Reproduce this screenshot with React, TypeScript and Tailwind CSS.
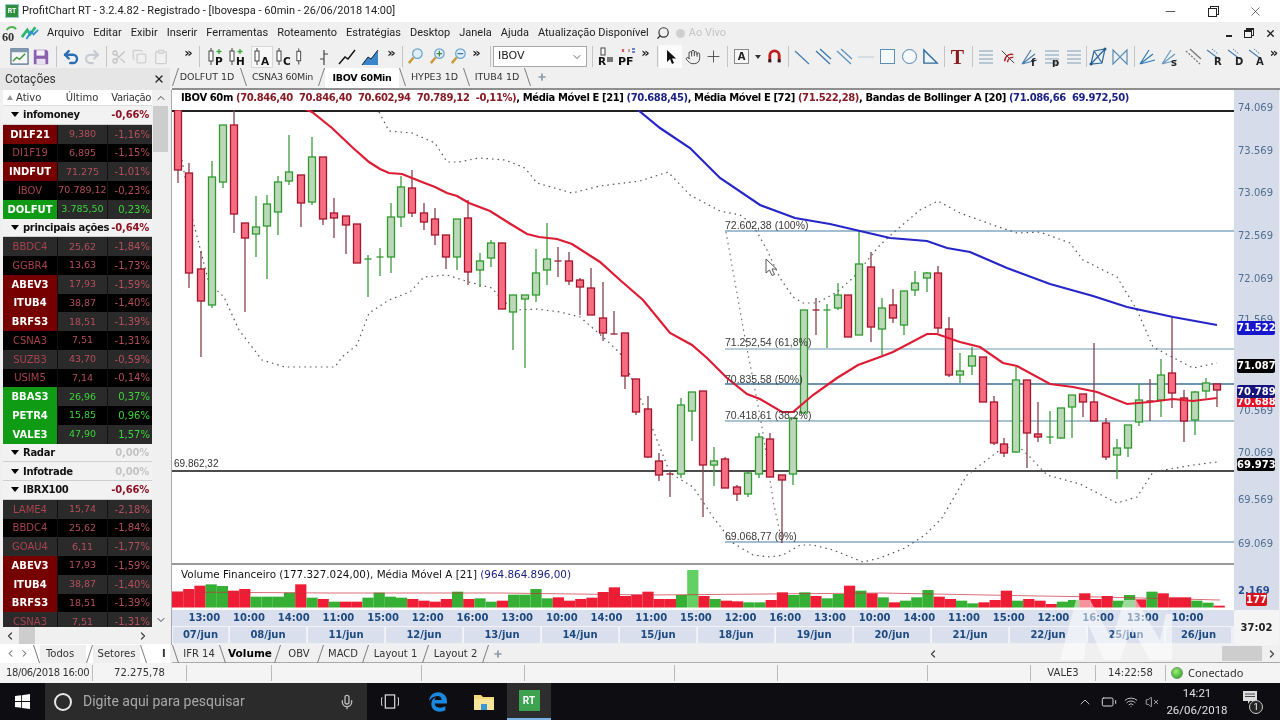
import { ChevronDown, ChevronLeft, ChevronRight, ChevronUp, Clipboard, Copy, Hand, Mic, Scissors, Search, VolumeX, Wifi, Undo2, Redo2, Battery, Plus, Minus, X } from 'lucide-react';
import { FaEdgeLegacy } from 'react-icons/fa6';

type Candle = [number, number, number, number, number, 'r' | 'g'];

const candles: Candle[] = [
  [178, 110, 110, 170, 183, 'r'], [189, 163, 173, 273, 288, 'r'], [201, 251, 269, 301, 357, 'r'], [212, 161, 177, 305, 308, 'g'],
  [223, 125, 125, 182, 188, 'g'], [234, 110, 125, 214, 233, 'r'], [245, 223, 223, 238, 312, 'r'], [256, 196, 227, 234, 257, 'g'],
  [267, 195, 204, 226, 279, 'g'], [278, 176, 182, 212, 235, 'g'], [289, 135, 172, 181, 185, 'g'], [301, 175, 175, 203, 227, 'r'],
  [312, 137, 157, 202, 205, 'g'], [323, 157, 157, 219, 225, 'r'], [334, 198, 213, 218, 238, 'r'], [346, 216, 216, 225, 254, 'r'],
  [357, 224, 224, 263, 263, 'r'], [368, 255, 259, 260, 297, 'g'], [380, 248, 257, 258, 276, 'g'], [391, 203, 217, 257, 273, 'g'],
  [401, 176, 187, 217, 227, 'g'], [412, 170, 188, 213, 217, 'r'], [424, 203, 213, 222, 230, 'r'], [435, 208, 219, 235, 245, 'r'],
  [446, 235, 235, 257, 269, 'r'], [457, 219, 219, 257, 270, 'g'], [468, 200, 218, 272, 285, 'r'], [480, 253, 261, 270, 287, 'g'],
  [491, 240, 243, 258, 267, 'g'], [502, 243, 243, 309, 309, 'r'], [513, 295, 295, 312, 350, 'g'], [525, 295, 295, 299, 368, 'g'],
  [536, 249, 273, 295, 302, 'g'], [547, 223, 259, 270, 285, 'g'], [558, 247, 261, 262, 277, 'r'], [569, 252, 261, 281, 285, 'r'],
  [580, 278, 280, 287, 315, 'r'], [591, 268, 288, 315, 315, 'r'], [603, 282, 318, 333, 341, 'r'], [614, 311, 334, 334, 334, 'r'],
  [625, 333, 333, 376, 389, 'r'], [636, 379, 379, 412, 415, 'r'], [648, 396, 409, 457, 458, 'r'], [659, 453, 461, 475, 481, 'r'],
  [670, 472, 474, 474, 497, 'r'], [681, 398, 405, 474, 478, 'g'], [692, 392, 392, 411, 441, 'g'], [703, 391, 391, 465, 517, 'r'],
  [714, 447, 461, 465, 486, 'g'], [725, 457, 459, 488, 488, 'r'], [737, 485, 487, 494, 501, 'r'], [748, 472, 473, 494, 497, 'g'],
  [759, 433, 437, 474, 478, 'g'], [770, 433, 439, 477, 477, 'r'], [782, 475, 475, 480, 543, 'r'], [793, 418, 418, 474, 485, 'g'],
  [804, 310, 310, 413, 413, 'g'], [816, 298, 310, 310, 335, 'r'], [827, 304, 310, 310, 348, 'g'], [838, 283, 295, 308, 310, 'g'],
  [848, 295, 295, 337, 337, 'r'], [859, 231, 264, 335, 335, 'g'], [871, 252, 267, 327, 342, 'r'], [882, 298, 308, 329, 355, 'g'],
  [893, 289, 305, 318, 323, 'r'], [904, 291, 291, 325, 335, 'g'], [915, 271, 283, 290, 296, 'g'], [927, 272, 273, 278, 292, 'g'],
  [938, 266, 273, 328, 333, 'r'], [949, 317, 329, 375, 377, 'r'], [960, 353, 371, 375, 383, 'g'], [972, 347, 356, 366, 375, 'g'],
  [983, 357, 357, 402, 402, 'r'], [994, 396, 402, 443, 445, 'r'], [1004, 438, 444, 453, 457, 'r'], [1016, 367, 380, 452, 453, 'g'],
  [1027, 380, 380, 433, 468, 'r'], [1038, 402, 434, 437, 442, 'r'], [1050, 411, 437, 437, 444, 'g'], [1061, 408, 408, 438, 439, 'g'],
  [1072, 395, 395, 407, 438, 'g'], [1083, 394, 394, 402, 417, 'r'], [1094, 343, 402, 421, 421, 'r'], [1106, 418, 423, 457, 460, 'r'],
  [1117, 439, 448, 455, 479, 'g'], [1128, 425, 425, 448, 457, 'g'], [1139, 384, 400, 422, 426, 'g'], [1150, 379, 401, 401, 421, 'r'],
  [1161, 359, 375, 400, 417, 'g'], [1172, 317, 373, 393, 408, 'r'], [1184, 390, 398, 421, 442, 'r'], [1195, 391, 392, 420, 435, 'g'],
  [1206, 378, 383, 391, 398, 'g'], [1217, 384, 384, 390, 407, 'r'],
];

const ma21 = '300,107 312,112 332,128 352,147 369,162 380,169 389,173 402,174 422,182 435,187 447,193 457,196 469,203 490,211 509,223 527,234 539,237 557,239 572,244 600,262 620,280 643,300 670,333 692,345 707,358 727,378 747,394 760,399 782,412 793,412 813,395 837,378 858,365 880,357 893,352 927,334 937,334 960,342 980,347 1003,363 1017,366 1050,384 1073,387 1097,392 1127,404 1150,402 1173,399 1193,401 1217,398';
const ma72 = '638,110 660,128 690,148 720,178 760,205 795,218 830,224 860,231 890,238 927,241 947,248 970,252 1007,268 1050,284 1093,296 1127,307 1173,317 1217,325';
const bbUpper = '379,112 389,131 412,133 435,143 447,162 459,162 479,158 505,160 525,168 537,183 572,193 600,186 640,181 668,172 690,195 720,211 740,215 747,220 757,232 767,250 780,278 793,297 803,303 817,303 837,292 853,278 880,245 893,233 920,210 938,201 960,213 993,225 1017,233 1040,232 1070,243 1083,260 1117,277 1137,310 1153,347 1193,368 1217,363';
const bbLower = '182,160 192,217 209,283 224,297 239,330 262,360 285,367 335,367 342,357 357,345 369,313 389,300 410,292 424,277 447,275 469,282 492,288 502,300 515,310 537,309 560,312 580,317 603,337 620,353 640,397 657,440 670,473 693,487 713,517 733,543 753,555 770,557 783,555 800,545 813,545 833,550 863,562 880,558 905,548 925,535 942,518 967,475 1000,450 1017,445 1030,457 1047,475 1080,484 1117,503 1137,497 1153,472 1193,465 1217,462';

const fibs = [
  { y: 231, c: '#4a7ea3', w: 1.2, x: 725, t: '72.602,38 (100%)', ty: 229 },
  { y: 349, c: '#6d9cbc', w: 1.2, x: 725, t: '71.252,54 (61,8%)', ty: 346 },
  { y: 384, c: '#3f7099', w: 1.3, x: 725, t: '70.835,58 (50%)', ty: 383 },
  { y: 421, c: '#a9c3d5', w: 1.8, x: 725, t: '70.418,61 (38,2%)', ty: 419 },
  { y: 542, c: '#4a7ea3', w: 1.2, x: 725, t: '69.068,77 (0%)', ty: 540 },
];

// topo de cada barra de volume (em y da tela) e cor
const volTops: [number, 'r' | 'g'][] = ([
  [95,'r'],[87,'r'],[77,'r'],[73,'g'],[78,'g'],[92,'r'],[87,'r'],[110,'g'],[110,'g'],[110,'g'],[98,'g'],[73,'r'],[113,'g'],[117,'r'],[125,'g'],[125,'r'],[125,'r'],[113,'g'],[98,'g'],[110,'g'],[113,'g'],[117,'r'],[122,'r'],[125,'r'],[117,'r'],[95,'g'],[117,'r'],[115,'g'],[125,'g'],[122,'r'],[104,'g'],[104,'g'],[87,'g'],[115,'g'],[112,'r'],[122,'r'],[117,'r'],[113,'r'],[96,'r'],[82,'r'],[108,'r'],[104,'r'],
  [95,'r'],[117,'r'],[117,'r'],[105,'g'],[30,'g'],[108,'r'],[117,'g'],[122,'r'],[124,'r'],[127,'g'],[127,'g'],[120,'r'],[97,'r'],[105,'g'],[97,'g'],[108,'r'],[115,'g'],[102,'g'],[77,'r'],[92,'g'],[100,'r'],[112,'g'],[127,'r'],[122,'g'],[112,'g'],[90,'g'],[110,'r'],[117,'r'],[122,'g'],[130,'g'],[127,'r'],[120,'r'],[92,'r'],[122,'g'],[117,'r'],[122,'r'],[132,'r'],[125,'g'],[120,'g'],[100,'r'],[117,'r'],[108,'r'],[122,'g'],[105,'g'],[118,'r'],[95,'g'],[100,'r'],[112,'r'],[112,'r'],[122,'g'],[128,'g'],[137,'r'],
] as [number, 'r' | 'g'][]).map(([z, c]) => [560 + z / 3, c]);

const priceLabels = [
  ['74.069', 108], ['73.569', 151], ['73.069', 193], ['72.569', 236], ['72.069', 279], ['71.569', 320],
  ['70.569', 411], ['70.069', 453], ['69.569', 500], ['69.069', 544],
] as [string, number][];

const times = ['13:00','10:00','14:00','11:00','15:00','12:00','16:00','13:00','10:00','14:00','11:00','15:00','12:00','16:00','13:00','10:00','14:00','11:00','15:00','12:00','16:00','13:00','10:00'];

type Quote = [string, string, string, '' | 'r' | 'g', ('g' | undefined)?];
const g1: Quote[] = [['DI1F21','9,380','-1,16%','r'],['DI1F19','6,895','-1,15%',''],['INDFUT','71.275','-1,01%','r'],['IBOV','70.789,12','-0,23%',''],['DOLFUT','3.785,50','0,23%','g','g']];
const g2: Quote[] = [['BBDC4','25,62','-1,84%',''],['GGBR4','13,63','-1,73%',''],['ABEV3','17,93','-1,59%','r'],['ITUB4','38,87','-1,40%','r'],['BRFS3','18,51','-1,39%','r'],['CSNA3','7,51','-1,31%',''],['SUZB3','43,70','-0,59%',''],['USIM5','7,14','-0,14%',''],['BBAS3','26,96','0,37%','g','g'],['PETR4','15,85','0,96%','g','g'],['VALE3','47,90','1,57%','g','g']];
const g3: Quote[] = [['LAME4','15,74','-2,18%',''],['BBDC4','25,62','-1,84%',''],['GOAU4','6,11','-1,77%',''],['ABEV3','17,93','-1,59%','r'],['ITUB4','38,87','-1,40%','r'],['BRFS3','18,51','-1,39%','r'],['CSNA3','7,51','-1,31%','']];

function GroupRow({ name, pct, zero }: { name: string; pct: string; zero?: boolean }) {
  return (
    <div className="h-[18.75px] shrink-0 flex items-center bg-[#f2f2f2] border-b border-[#cfcfcf] pl-[8px] pr-[3px]">
      <span className="w-0 h-0 border-x-[4px] border-x-transparent border-t-[5px] border-t-black mr-[4px]" />
      <span className="text-[10px] font-bold text-[#111] whitespace-nowrap tracking-[-0.3px]">{name}</span>
      <span className={`ml-auto text-[10px] font-bold tracking-[-0.2px] ${zero ? 'text-[#c4c4c4]' : 'text-[#8e1224]'}`}>{pct}</span>
    </div>
  );
}

function QuoteRows({ rows }: { rows: Quote[] }) {
  return (
    <>
      {rows.map((r, i) => {
        const zebra = i % 2 === 0 ? 'bg-[#2a2a2a]' : 'bg-black';
        const col = r[4] === 'g' ? 'text-[#3bd43b]' : 'text-[#b44f5a]';
        const tick = r[3] === 'r' ? 'bg-[#760000] text-white font-bold' : r[3] === 'g' ? 'bg-[#0f9c14] text-white font-bold' : `${zebra} text-[#a8424e]`;
        return (
          <div key={r[0] + i} className={`h-[18.75px] shrink-0 flex items-center text-[10px] ${zebra}`}>
            <div className={`w-[54px] h-full flex items-center justify-center ${tick}`}>{r[0]}</div>
            <div className={`w-[50px] h-full flex items-center justify-center border-l border-[#111] ${col} whitespace-nowrap text-[9.5px]`}>{r[1]}</div>
            <div className={`w-[45px] h-full flex items-center justify-end pr-[2px] border-l border-[#111] ${col}`}>{r[2]}</div>
          </div>
        );
      })}
    </>
  );
}

function Slash({ back, h = 'h-[18px]' }: { back?: boolean; h?: string }) {
  return (
    <svg viewBox="0 0 7 18" className={`w-[7px] shrink-0 ${h}`}>
      <line x1={back ? 0.5 : 6.5} y1="0" x2={back ? 6.5 : 0.5} y2="18" stroke="#7c7c7c" strokeWidth="1" />
    </svg>
  );
}

function Tb({ w = 'w-[21px]', children }: { w?: string; children?: React.ReactNode }) {
  return <div className={`${w} h-[22px] shrink-0 flex items-center justify-center`}>{children}</div>;
}

function Sep({ cls }: { cls: string }) {
  return <div className={`w-px h-[21px] bg-[#c4c4c4] shrink-0 ${cls}`} />;
}

function More({ w = 'w-[21px]', cls = '' }: { w?: string; cls?: string }) {
  return <div className={`${w} ${cls} h-[22px] shrink-0 flex items-start justify-center text-[13px] leading-[14px] font-bold text-[#222]`}>»</div>;
}

function CandleIco({ letter }: { letter?: string }) {
  return (
    <svg viewBox="0 0 20 20" className="w-[20px] h-[20px]">
      <line x1="5" y1="1" x2="5" y2="18" stroke="#444" strokeWidth="1" />
      <rect x="3" y="4" width="4" height="10" fill="#fff" stroke="#444" strokeWidth="1" />
      {letter && <text x="9" y="18" fontSize="10.5" fontWeight="700" fill="#111" fontFamily="DejaVu Sans">{letter}</text>}
      {(letter === 'P' || letter === 'H') && <path d="M13 2v5M10.5 4.5h5" stroke="#3ca63c" strokeWidth="1.3" />}
    </svg>
  );
}

function Diag({ c = '#4a7fb0', dash, double }: { c?: string; dash?: boolean; double?: boolean }) {
  return (
    <svg viewBox="0 0 18 18" className="w-[18px] h-[18px]">
      <line x1="2" y1="3" x2="16" y2="16" stroke={c} strokeWidth="1.3" strokeDasharray={dash ? '2 1.5' : undefined} />
      {double && <line x1="6" y1="1" x2="17" y2="11" stroke={c} strokeWidth="1.3" />}
    </svg>
  );
}

function LetterLine({ l, c = '#4a7fb0' }: { l: string; c?: string }) {
  return (
    <svg viewBox="0 0 20 20" className="w-[20px] h-[20px]">
      <line x1="2" y1="3" x2="14" y2="12" stroke={c} strokeWidth="1.2" />
      <line x1="7" y1="2" x2="13" y2="7" stroke={c} strokeWidth="1" strokeDasharray="1.5 1" />
      <text x="9" y="18" fontSize="10" fontWeight="700" fill="#222" fontFamily="DejaVu Sans">{l}</text>
    </svg>
  );
}

function Fan({ l, c = '#4a7fb0' }: { l?: string; c?: string }) {
  return (
    <svg viewBox="0 0 20 20" className="w-[20px] h-[20px]">
      <path d="M2 17L11 3M2 17L15 7M2 17L17 13" stroke={c} strokeWidth="1.2" fill="none" />
      {l && <text x="11" y="19" fontSize="10" fontWeight="700" fill="#222" fontFamily="DejaVu Sans">{l}</text>}
    </svg>
  );
}

function Lines({ l }: { l?: string }) {
  return (
    <svg viewBox="0 0 20 20" className="w-[20px] h-[20px]">
      <path d="M3 4h14M3 8h14M3 12h14M3 16h14" stroke="#7f9fb8" strokeWidth="1.1" />
      {l && <text x="10" y="19" fontSize="10" fontWeight="700" fill="#222" fontFamily="DejaVu Sans">{l}</text>}
    </svg>
  );
}

function Toolbar() {
  return (
    <div className="h-[24px] shrink-0 flex items-center pl-[9px] pt-px">
      <Tb>
        <svg viewBox="0 0 20 20" className="w-[19px] h-[19px]">
          <rect x="1" y="2" width="18" height="16" fill="#f6f6f6" stroke="#4f6f8e" strokeWidth="1.3" />
          <rect x="1" y="2" width="18" height="3.5" fill="#7f97ad" />
          <path d="M3 15l4-4 3 2 6-6" stroke="#3f9a3f" strokeWidth="1.5" fill="none" />
        </svg>
      </Tb>
      <Tb>
        <svg viewBox="0 0 20 20" className="w-[18px] h-[18px]">
          <path d="M2 2h14l2 2v14H2z" fill="#8a5fb0" />
          <rect x="5" y="2.5" width="9" height="6" fill="#f4f0f8" />
          <rect x="5" y="12" width="10" height="6" fill="#e8dff0" />
        </svg>
      </Tb>
      <Sep cls="ml-[5px] mr-[3px]" />
      <Tb><Undo2 size={18} strokeWidth={3.2} color="#2a6fb5" /></Tb>
      <Tb><Redo2 size={18} strokeWidth={3} color="#c6ccd2" /></Tb>
      <Sep cls="ml-[4px] mr-px" />
      <Tb><Scissors size={16} color="#c4c4c4" /></Tb>
      <Tb><Copy size={15} color="#cfcfcf" /></Tb>
      <Tb><Clipboard size={16} color="#cfcfcf" /></Tb>
      <More cls="ml-[7px]" />
      <Sep cls="mr-[5px]" />
      <Tb><CandleIco letter="P" /></Tb>
      <Tb><CandleIco letter="H" /></Tb>
      <div className="ml-[4px] w-[22px] h-[22px] shrink-0 flex items-center justify-center bg-[#f8f8f8] border border-[#d8d8d8]"><CandleIco letter="A" /></div>
      <Tb><CandleIco letter="C" /></Tb>
      <Tb w="w-[19px]"><CandleIco /></Tb>
      <Tb w="w-[22px]">
        <svg viewBox="0 0 18 18" className="w-[18px] h-[18px]"><path d="M9 2v15M5 11h4M9 6h4" stroke="#444" strokeWidth="1.2" fill="none" /></svg>
      </Tb>
      <Tb w="w-[24px]">
        <svg viewBox="0 0 20 20" className="w-[20px] h-[20px]"><path d="M2 17l6-7 3 2 7-9" stroke="#111" strokeWidth="1.4" fill="none" /></svg>
      </Tb>
      <Tb w="w-[22px]">
        <svg viewBox="0 0 20 20" className="w-[20px] h-[20px]"><path d="M2 18l6-8 3 2 7-9v15z" fill="#3a86c8" /><path d="M2 18l6-8 3 2 7-9" stroke="#123" strokeWidth="1" fill="none" /></svg>
      </Tb>
      <More />
      <Sep cls="mr-[2px]" />
      <Tb>
        <svg viewBox="0 0 20 20" className="w-[19px] h-[19px]"><circle cx="12" cy="7" r="5" fill="#dfeef7" stroke="#6aa5cc" strokeWidth="1.3" /><path d="M8 11l-5 6" stroke="#c99a3c" strokeWidth="2.6" /></svg>
      </Tb>
      <Tb w="w-[22px]">
        <svg viewBox="0 0 20 20" className="w-[19px] h-[19px]"><circle cx="12" cy="7" r="5" fill="#dfeef7" stroke="#6aa5cc" strokeWidth="1.3" /><path d="M8 11l-5 6" stroke="#c99a3c" strokeWidth="2.6" /><path d="M12 4v6M9 7h6" stroke="#3f8a3f" strokeWidth="1.3" /></svg>
      </Tb>
      <Tb>
        <svg viewBox="0 0 20 20" className="w-[19px] h-[19px]"><circle cx="12" cy="7" r="5" fill="#dfeef7" stroke="#6aa5cc" strokeWidth="1.3" /><path d="M8 11l-5 6" stroke="#c99a3c" strokeWidth="2.6" /><path d="M9 7h6" stroke="#3f6f9f" strokeWidth="1.3" /></svg>
      </Tb>
      <More w="w-[15px]" />
      <Sep cls="ml-[6px] mr-[2px]" />
      <div className="w-[94px] h-[21px] shrink-0 bg-white border border-[#a8a8a8] flex items-center pl-[4px] pr-[3px] text-[11px] text-[#222]">
        <span>IBOV</span>
        <ChevronDown size={12} color="#666" className="ml-auto" />
      </div>
      <Sep cls="ml-[5px] mr-[2px]" />
      <Tb>
        <svg viewBox="0 0 20 20" className="w-[20px] h-[20px]"><rect x="5" y="1" width="4" height="7" fill="#fff" stroke="#444" /><rect x="11" y="10" width="6" height="5" fill="#777" /><text x="2" y="18" fontSize="10.5" fontWeight="700" fill="#111" fontFamily="DejaVu Sans">R</text></svg>
      </Tb>
      <Tb>
        <svg viewBox="0 0 20 20" className="w-[20px] h-[20px]"><path d="M5 2l2 3M7 2l-2 3M12 2v3" stroke="#d0384a" strokeWidth="1" /><path d="M15 2h3M15 5h3" stroke="#3a5fc0" strokeWidth="1.4" /><text x="1" y="18" fontSize="11" fontWeight="700" fill="#111" fontFamily="DejaVu Sans">PF</text></svg>
      </Tb>
      <More w="w-[15px]" cls="ml-[1px]" />
      <Sep cls="ml-[4px] mr-[1px]" />
      <div className="w-[23px] h-[23px] shrink-0 flex items-center justify-center bg-[#fbfbfb]">
        <svg viewBox="0 0 14 16" className="w-[14px] h-[16px]"><path d="M3 1v12l3-3 2 5 2-1-2-4.500h4z" fill="#111" /></svg>
      </div>
      <Tb><Hand size={16} color="#333" strokeWidth={1.3} /></Tb>
      <Tb><Plus size={19} color="#333" strokeWidth={1} /></Tb>
      <Sep cls="ml-[3px] mr-[3px]" />
      <Tb>
        <div className="w-[15px] h-[15px] bg-[#f7f7f7] border border-[#888] flex items-center justify-center text-[10px] font-bold text-[#222]">A</div>
      </Tb>
      <div className="w-0 h-0 border-x-[3px] border-x-transparent border-t-[4px] border-t-[#333] mx-[3px] shrink-0" />
      <Tb w="w-[21px]">
        <svg viewBox="0 0 16 16" className="w-[15px] h-[15px]"><path d="M3 14V7a5 5 0 0 1 10 0v7" stroke="#c01c1c" strokeWidth="3" fill="none" /><path d="M1.500 12.500h3M11.500 12.500h3" stroke="#222" strokeWidth="3" /></svg>
      </Tb>
      <Sep cls="ml-[3px] mr-[3px]" />
      <Tb w="w-[20px]"><Diag /></Tb>
      <Tb><Diag c="#3a78ab" double /></Tb>
      <Tb w="w-[22px]"><Diag c="#5c92bd" double /></Tb>
      <Tb>
        <svg viewBox="0 0 18 18" className="w-[18px] h-[18px]"><line x1="1" y1="9" x2="17" y2="9" stroke="#c2d2de" strokeWidth="1.3" /></svg>
      </Tb>
      <Tb w="w-[22px]"><div className="w-[15px] h-[15px] bg-[#f6f9fb] border border-[#5d8fb8]" /></Tb>
      <Tb w="w-[22px]"><div className="w-[15px] h-[15px] rounded-full bg-[#f6f9fb] border border-[#4f84b0]" /></Tb>
      <Tb>
        <svg viewBox="0 0 18 18" className="w-[17px] h-[17px]"><path d="M2 2v14h14z" fill="#eef4f8" stroke="#2f6a9c" strokeWidth="1.5" /></svg>
      </Tb>
      <Sep cls="ml-[3px] mr-[2px]" />
      <Tb><span className="font-['Liberation_Serif',serif] text-[20px] leading-none font-bold text-[#8c1c1c]">T</span></Tb>
      <Sep cls="ml-[4px] mr-[2px]" />
      <Tb w="w-[22px]"><Lines /></Tb>
      <Tb w="w-[22px]">
        <svg viewBox="0 0 20 20" className="w-[19px] h-[19px]"><path d="M3 4l13 13" stroke="#333" strokeWidth="1" /><path d="M6 15a7 7 0 0 1 9-7M9 16a5 5 0 0 1 6-5" stroke="#b5202a" strokeWidth="1.5" fill="none" /></svg>
      </Tb>
      <Tb w="w-[22px]"><Fan l="f" /></Tb>
      <Tb w="w-[22px]"><Lines l="p" /></Tb>
      <Tb w="w-[22px]"><Lines /></Tb>
      <Sep cls="ml-[1px]" />
      <Tb w="w-[22px]">
        <svg viewBox="0 0 20 20" className="w-[20px] h-[20px]"><path d="M3 17L6 4l11-2-3 14zM6 4l8 12M3 17L17 2" stroke="#2f6a9c" strokeWidth="1.2" fill="none" /><circle cx="3" cy="17" r="1.500" fill="#1f5a8c" /><circle cx="17" cy="2" r="1.500" fill="#1f5a8c" /></svg>
      </Tb>
      <Tb w="w-[22px]">
        <svg viewBox="0 0 20 20" className="w-[20px] h-[20px]"><path d="M3 17V3l7 7 7-7v14l-7-7z" stroke="#5a8db5" strokeWidth="1.2" fill="none" /></svg>
      </Tb>
      <Sep cls="ml-[3px] mr-[2px]" />
      <Tb w="w-[22px]"><Fan c="#2f7ab5" /></Tb>
      <Tb w="w-[22px]"><Fan l="s" c="#6a9ac0" /></Tb>
      <Tb w="w-[23px]"><Diag c="#777" dash double /></Tb>
      <Tb><LetterLine l="R" /></Tb>
      <Tb w="w-[22px]"><LetterLine l="D" /></Tb>
      <Tb w="w-[20px]"><LetterLine l="A" /></Tb>
      <More w="w-[14px]" />
    </div>
  );
}

function ChartSvg() {
  return (
    <svg viewBox="172 110 1063 455" className="w-[1063px] h-[455px] block bg-white">
      <text x="174" y="467" fontSize="10" fill="#333" fontFamily="Liberation Sans">69.862,32</text>
      {fibs.map(f => (
        <line key={f.y} x1={f.x} y1={f.y} x2="1235" y2={f.y} stroke={f.c} strokeWidth={f.w} />
      ))}
      <line x1="172" y1="471" x2="1235" y2="471" stroke="#111" strokeWidth="1.600" />
      <line x1="172" y1="111" x2="1235" y2="111" stroke="#222" strokeWidth="2.200" />
      <polyline points="726,232 745,338 757,400 763,433 773,500 782,543" fill="none" stroke="#666" strokeWidth="1.100" strokeDasharray="1.500 4" />
      <polyline points={bbUpper} fill="none" stroke="#555" strokeWidth="1.200" strokeDasharray="1.500 4" />
      <polyline points={bbLower} fill="none" stroke="#555" strokeWidth="1.200" strokeDasharray="1.500 4" />
      {candles.map(([x, wt, bt, bb, wb, c]) => {
        const red = c === 'r';
        return (
          <g key={x}>
            <line x1={x} y1={wt} x2={x} y2={wb} stroke={red ? '#84404a' : '#3d9a3d'} strokeWidth="1.300" />
            {bb - bt < 2
              ? <line x1={x - 3.5} y1={bt} x2={x + 3.5} y2={bt} stroke={red ? '#9c2a3a' : '#3aa03a'} strokeWidth="1.400" />
              : <rect x={x - 3.5} y={bt} width="7" height={bb - bt} fill={red ? '#f56d80' : '#bdd8b9'} stroke={red ? '#a5142c' : '#2f9b2f'} strokeWidth="1.300" />}
          </g>
        );
      })}
      <polyline points={ma72} fill="none" stroke="#2626c8" strokeWidth="2.200" />
      <polyline points={ma21} fill="none" stroke="#dd1c34" strokeWidth="2.200" />
      {fibs.map(f => (
        <text key={f.t} x={f.x} y={f.ty} fontSize="10.500" fill="#3a3a3a" fontFamily="Liberation Sans">{f.t}</text>
      ))}
      <path d="M766 259v14l3.500-3 2.500 5.500 2.500-1-2.500-5.500h4.500z" fill="#fff" stroke="#555" strokeWidth="1" />
    </svg>
  );
}

function VolumePanel() {
  return (
    <div className="relative h-[45px] shrink-0 bg-white">
      <svg viewBox="172 565 1063 45" className="w-[1063px] h-[45px] block">
        {volTops.map(([y, c], i) => (
          <rect key={i} x={172 + i * 11.2} y={y} width="11.200" height={607.5 - y} fill={i === 46 ? '#62d062' : c === 'r' ? '#ee1c34' : '#35b035'} />
        ))}
        <polyline points="172,592 330,593 500,593 650,595 880,593 1040,596 1100,597 1220,600" fill="none" stroke="#c9303f" strokeOpacity="0.700" strokeWidth="1" />
      </svg>
      <div className="absolute left-[9px] top-[2px] text-[10.400px] text-[#111] whitespace-nowrap">
        Volume Financeiro <span className="text-[#111]">(177.327.024,00)</span>, Média Móvel A [21] <span className="text-[#1c2280]">(964.864.896,00)</span>
      </div>
    </div>
  );
}

const dateCells: [string, string][] = [
  ['07/jun', 'w-[56px]'], ['08/jun', 'w-[77px]'], ['11/jun', 'w-[77px]'], ['12/jun', 'w-[77px]'], ['13/jun', 'w-[77px]'], ['14/jun', 'w-[77px]'], ['15/jun', 'w-[77px]'],
  ['18/jun', 'w-[77px]'], ['19/jun', 'w-[77px]'], ['20/jun', 'w-[77px]'], ['21/jun', 'w-[77px]'], ['22/jun', 'w-[77px]'], ['25/jun', 'w-[77px]'], ['26/jun', 'w-[66px]'],
];

function PriceAxis() {
  return (
    <div className="w-[45px] shrink-0 flex flex-col">
      <div className="relative h-[520px] bg-[#d6dce9] overflow-hidden">
        {priceLabels.map(([t, y]) => (
          <span key={t} className="absolute left-[4px] text-[10px] leading-[12px] text-[#4f6f92]" style={{ top: y - 90 - 6 }}>{t}</span>
        ))}
        <span className="absolute left-[4px] top-[495px] text-[10px] leading-[12px] font-bold text-[#2a4f92]">2.169</span>
        <span className="absolute left-[3px] top-[231px] w-[38px] h-[14px] rounded-[2px] bg-[#1616cc] text-white text-[10px] leading-[14px] font-bold text-center">71.522</span>
        <span className="absolute left-[3px] top-[269px] w-[38px] h-[14px] rounded-[2px] bg-black text-white text-[10px] leading-[14px] font-bold text-center">71.087</span>
        <span className="absolute left-[3px] top-[306px] w-[38px] h-[11px] bg-[#e41428] text-white text-[10px] leading-[11px] font-bold text-center">70.688</span>
        <span className="absolute left-[3px] top-[295px] w-[38px] h-[13px] rounded-[2px] bg-[#14147c] text-white text-[10px] leading-[13px] font-bold text-center">70.789</span>
        <span className="absolute left-[3px] top-[368px] w-[38px] h-[13px] rounded-[2px] bg-black text-white text-[10px] leading-[13px] font-bold text-center">69.973</span>
        <span className="absolute left-[12px] top-[503px] w-[21px] h-[13px] rounded-[2px] bg-[#d8141e] text-white text-[10px] leading-[13px] font-bold text-center">177</span>
      </div>
      <div className="flex-1 bg-[#f4f4f4] flex items-center justify-center text-[10px] font-bold text-[#222]">37:02</div>
    </div>
  );
}

function Watermark() {
  return (
    <svg viewBox="0 0 140 72" className="absolute left-[886px] top-[504px] w-[140px] h-[72px] pointer-events-none">
      <path d="M18 6h14l22 40 12-40h12l24 40 6-26 6 0 0 46H92L74 34 62 66H46L30 30 26 66H2z" fill="#fff" fillOpacity="0.520" />
    </svg>
  );
}

export default function App() {
  return (
    <div className="w-[1280px] h-[720px] overflow-hidden flex flex-col bg-[#f0f0f0] font-['DejaVu_Sans',sans-serif] blur-[0.4px]">
      {/* barra de titulo */}
      <div className="h-[22px] shrink-0 bg-white flex items-center pl-[5px] font-['Roboto',sans-serif]">
        <div className="w-[14px] h-[14px] bg-[#2f8f3f] border border-[#9cc] text-[7px] leading-[12px] font-bold text-white text-center">RT</div>
        <span className="ml-[3px] text-[11px] text-[#222] whitespace-nowrap">ProfitChart RT - 3.2.4.82 - Registrado - [Ibovespa - 60min - 26/06/2018 14:00]</span>
        <Minus size={15} strokeWidth={1.2} color="#222" className="ml-auto mr-[30px]" />
        <div className="relative w-[11px] h-[11px] mr-[29px]">
          <div className="absolute right-0 top-0 w-[9px] h-[9px] border border-[#222]" />
          <div className="absolute left-0 bottom-0 w-[9px] h-[9px] border border-[#222] bg-white" />
        </div>
        <X size={15} strokeWidth={1} color="#222" className="mr-[17px]" />
      </div>
      {/* menu */}
      <div className="h-[22px] shrink-0 flex items-center font-['Roboto',sans-serif] text-[11px] text-[#222]">
        <svg viewBox="0 0 20 20" className="w-[19px] h-[20px] ml-[1px]">
          <path d="M6 7a6 6 0 0 1 10-1" stroke="#4cae4c" strokeWidth="2" fill="none" />
          <text x="1" y="18" fontSize="13" fontWeight="700" fill="#333" fontFamily="Liberation Serif">60</text>
        </svg>
        <svg viewBox="0 0 20 16" className="w-[18px] h-[15px] ml-[1px]">
          <path d="M1 12l6-8 3 5 6-8" stroke="#2bb573" strokeWidth="3" fill="none" />
          <path d="M6 14l5-8 3 3 5-5" stroke="#2f8fd8" strokeWidth="2" fill="none" />
        </svg>
        <div className="flex gap-[9px] ml-[8px] whitespace-nowrap">
          {['Arquivo', 'Editar', 'Exibir', 'Inserir', 'Ferramentas', 'Roteamento', 'Estratégias', 'Desktop', 'Janela', 'Ajuda', 'Atualização Disponível'].map(m => <span key={m}>{m}</span>)}
        </div>
        <Search size={14} color="#333" className="ml-[7px] -scale-x-100" />
        <div className="w-[9px] h-[9px] rounded-full bg-[#cfcfcf] ml-[6px]" />
        <span className="ml-[4px] text-[#c4c4c4]">Ao Vivo</span>
        <span className="ml-auto mr-[12px] w-[6px] h-[2px] bg-[#222] mt-[6px]" />
        <div className="relative w-[10px] h-[10px] mr-[11px]">
          <div className="absolute right-0 top-0 w-[8px] h-[8px] border border-[#222] border-t-2" />
          <div className="absolute left-0 bottom-0 w-[8px] h-[8px] border border-[#222] border-t-2 bg-[#f0f0f0]" />
        </div>
        <X size={11} strokeWidth={3} color="#222" className="mr-[4px]" />
      </div>
      <Toolbar />

      <div className="flex-1 flex min-h-0">
        {/* cotacoes */}
        <div className="w-[170px] shrink-0 flex flex-col">
          <div className="h-[22px] shrink-0 flex items-center pl-[5px] pr-[5px] bg-[#e6e6e6] font-['Roboto',sans-serif] text-[12px] text-[#333]">
            Cotações
            <X size={12} strokeWidth={2.6} color="#222" className="ml-auto" />
          </div>
          <div className="h-[537px] shrink-0 flex pl-[3px]">
            <div className="w-[149px] flex flex-col overflow-hidden">
              <div className="h-[16px] shrink-0 flex items-center bg-white text-[10px] text-[#333] border-b border-[#ddd]">
                <div className="w-[54px] flex items-center pl-[4px] gap-[3px]">
                  <span className="w-0 h-0 border-x-[3.500px] border-x-transparent border-b-[5px] border-b-[#999]" />
                  Ativo
                </div>
                <div className="w-[50px] text-center">Último</div>
                <div className="w-[45px] text-right pr-[1px] whitespace-nowrap tracking-[-0.4px]">Variação</div>
              </div>
              <GroupRow name="infomoney" pct="-0,66%" />
              <QuoteRows rows={g1} />
              <GroupRow name="principais ações" pct="-0,64%" />
              <QuoteRows rows={g2} />
              <GroupRow name="Radar" pct="0,00%" zero />
              <GroupRow name="Infotrade" pct="0,00%" zero />
              <GroupRow name="IBRX100" pct="-0,66%" />
              <QuoteRows rows={g3} />
            </div>
            <div className="w-[15px] ml-px flex flex-col items-center bg-[#f0f0f0]">
              <ChevronUp size={12} color="#444" className="mt-[2px] shrink-0" />
              <div className="w-full h-[46px] bg-[#cdcdcd] mt-[2px]" />
              <ChevronDown size={12} color="#444" className="mt-auto mb-[1px] shrink-0" />
            </div>
          </div>
          <div className="h-[17px] shrink-0 flex items-center pl-[4px] pr-[21px]">
            <ChevronLeft size={12} color="#444" strokeWidth={2.500} />
            <div className="w-[16px] h-full bg-[#cdcdcd] ml-[3px]" />
            <ChevronRight size={12} color="#444" strokeWidth={2.500} className="ml-auto" />
          </div>
          <div className="h-[19px] shrink-0 flex items-center pl-[5px] text-[10px] text-[#333] bg-white overflow-hidden">
            <ChevronLeft size={11} strokeWidth={2} className="shrink-0" />
            <ChevronRight size={11} strokeWidth={2} className="ml-[3px] mr-[3px] shrink-0" />
            <Slash back />
            <span className="w-[46px] pr-[6px] text-center shrink-0 bg-[#efefef] leading-[18px]">Todos</span>
            <Slash />
            <span className="w-[47px] text-center shrink-0 bg-[#efefef] leading-[18px]">Setores</span>
            <Slash back />
            <span className="ml-[15px] font-bold">I</span>
          </div>
        </div>

        {/* grafico */}
        <div className="flex-1 min-w-0 flex flex-col pl-[2px]">
          <div className="h-[20px] shrink-0 flex items-start text-[9.500px] text-[#333] whitespace-nowrap">
            <Slash />
            <span className="w-[61px] pr-[5px] text-center leading-[18px]">DOLFUT 1D</span>
            <Slash back />
            <span className="w-[71px] text-center tracking-[-0.3px] leading-[18px]">CSNA3 60Min</span>
            <Slash />
            <span className="w-[74px] text-center font-bold text-black bg-white leading-[20px] tracking-[-0.3px]">IBOV 60Min</span>
            <Slash back />
            <span className="w-[57px] text-center leading-[18px]">HYPE3 1D</span>
            <Slash back />
            <span className="w-[54px] text-center leading-[18px]">ITUB4 1D</span>
            <Slash back />
            <Plus size={10} strokeWidth={4} color="#8a9aa8" className="ml-[6px] mt-[4px]" />
          </div>
          <div className="flex h-[557px] shrink-0 border-t-2 border-[#8f8f8f]">
            <div className="w-[1063px] shrink-0 flex flex-col border-l border-[#aaa] -ml-px relative">
              <div className="h-[20px] shrink-0 bg-white flex items-start pl-[9px] text-[10px] leading-[15px] font-bold text-black whitespace-nowrap tracking-[-0.4px]">
                IBOV 60m&nbsp;<span className="text-[#861b24]">(70.846,40&nbsp; 70.846,40&nbsp; 70.602,94&nbsp; 70.789,12&nbsp; -0,11%)</span>, Média Móvel E [21]&nbsp;<span className="text-[#1c2280]">(70.688,45)</span>, Média Móvel E [72]&nbsp;<span className="text-[#861b24]">(71.522,28)</span>, Bandas de Bollinger A [20]&nbsp;<span className="text-[#1c2280]">(71.086,66&nbsp; 69.972,50)</span>
              </div>
              <ChartSvg />
              <div className="h-[2px] shrink-0 bg-[#9a9a9a] -mt-[2px] relative" />
              <VolumePanel />
              <div className="h-[16px] shrink-0 bg-[#d9dfec] flex pl-[10px] text-[10px] font-bold leading-[15px] text-[#1d4a80]">
                {times.map((t, i) => <span key={i} className="w-[44.700px] shrink-0 text-center">{t}</span>)}
              </div>
              <div className="h-[18px] shrink-0 bg-[#eceff5] flex gap-px text-[10px] font-bold text-[#1d4a80]">
                {dateCells.map(([d, w]) => <span key={d} className={`${w} shrink-0 h-[17px] bg-[#d9dfec] border-t border-l border-[#f2f4f8] text-center leading-[15px]`}>{d}</span>)}
              </div>
              <Watermark />
            </div>
            <PriceAxis />
          </div>
          <div className="h-[18px] shrink-0 flex items-center text-[10px] text-[#333] whitespace-nowrap border-b border-[#aaa]">
            <Slash back />
            <span className="w-[40px] text-center">IFR 14</span>
            <Slash back />
            <span className="w-[48px] text-center font-bold text-black text-[10.500px]">Volume</span>
            <Slash />
            <span className="w-[36px] text-center">OBV</span>
            <Slash />
            <span className="w-[38px] text-center">MACD</span>
            <Slash />
            <span className="w-[53px] text-center">Layout 1</span>
            <Slash />
            <span className="w-[53px] text-center">Layout 2</span>
            <Slash />
            <Plus size={10} strokeWidth={4} color="#8a9aa8" className="ml-[4px]" />
            <ChevronLeft size={12} strokeWidth={2.500} color="#444" className="ml-[424px]" />
            <div className="ml-auto w-[40px] h-[15px] bg-[#cdcdcd]" />
            <ChevronRight size={12} strokeWidth={2.500} color="#444" className="ml-[4px] mr-[2px]" />
          </div>
        </div>
      </div>

      {/* status */}
      <div className="h-[20px] shrink-0 flex items-center bg-[#f4f4f4] text-[10px] text-[#333] whitespace-nowrap">
        <span className="w-[93px] pl-[6px] border-r border-[#bbb] leading-[16px] tracking-[-0.4px]">18/06/2018 16:00</span>
        <span className="w-[94px] text-center border-r border-[#bbb] leading-[16px]">72.275,78</span>
        <span className="w-[85px] h-[16px] border-r border-[#bbb]" />
        <span className="w-[150px] h-[16px] border-r border-[#bbb]" />
        <span className="w-[103px] h-[16px] border-r border-[#bbb]" />
        <span className="w-[150px] h-[16px] border-r border-[#bbb]" />
        <span className="w-[103px] h-[16px] border-r border-[#bbb]" />
        <span className="w-[150px] h-[16px] border-r border-[#bbb]" />
        <span className="w-[103px] h-[16px] border-r border-[#bbb]" />
        <span className="w-[65px] text-center border-r border-[#bbb] leading-[16px]">VALE3</span>
        <span className="w-[70px] text-center border-r border-[#bbb] leading-[16px]">14:22:58</span>
        <span className="ml-[5px] w-[12px] h-[12px] rounded-full bg-[radial-gradient(circle_at_40%_35%,#9fef6f,#1f9a1f)] border border-[#6a9a6a]" />
        <span className="ml-[5px] text-[11px] font-['Noto_Sans',sans-serif]">Conectado</span>
      </div>

      {/* barra de tarefas */}
      <div className="h-[37px] shrink-0 bg-[#0e0e12] flex items-center text-[#d8d8d8] font-['Roboto',sans-serif]">
        <div className="w-[45px] h-full flex items-center justify-center">
          <svg viewBox="0 0 16 16" className="w-[15px] h-[15px]"><path d="M0 2.200L6.600 1.300V7.500H0zM7.500 1.200L16 0V7.500H7.500zM0 8.500H6.600V14.700L0 13.800zM7.500 8.500H16V16L7.500 14.800z" fill="#fff" /></svg>
        </div>
        <div className="w-[322px] h-full bg-[#2b2b2b] flex items-center pl-[9px] pr-[12px] text-[14px] text-[#a8a8a8]">
          <div className="w-[18px] h-[18px] rounded-full border-[2.500px] border-[#e8e8e8]" />
          <span className="ml-[11px]">Digite aqui para pesquisar</span>
          <Mic size={16} color="#bbb" className="ml-auto" />
        </div>
        <div className="w-[45px] flex justify-center">
          <svg viewBox="0 0 20 16" className="w-[20px] h-[15px]"><rect x="5" y="1" width="10" height="14" fill="none" stroke="#ddd" strokeWidth="1.300" /><path d="M2 4H1v8h1M18 4h1v8h-1" fill="none" stroke="#ddd" /></svg>
        </div>
        <div className="w-[49px] pl-[3px] flex justify-center"><FaEdgeLegacy size={20} color="#1a87e0" /></div>
        <div className="w-[46px] flex justify-center">
          <svg viewBox="0 0 22 18" className="w-[22px] h-[18px]"><path d="M1 2h7l2 2h11v13H1z" fill="#f4d97a" /><rect x="1" y="6" width="20" height="11" fill="#f9e59a" /><rect x="8" y="11" width="6" height="6" fill="#3a98d8" /></svg>
        </div>
        <div className="w-[44px] h-full bg-[#2d2d2d] border-b-2 border-[#7ab4e6] flex items-center justify-center">
          <div className="w-[21px] h-[21px] bg-[#3da350] text-[10px] font-bold text-white text-center leading-[21px]">RT</div>
        </div>
        <ChevronUp size={16} strokeWidth={1.300} className="ml-auto mr-[8px]" />
        <Battery size={16} strokeWidth={1.500} className="mr-[7px]" />
        <Wifi size={14} strokeWidth={1.500} className="mr-[7px]" />
        <VolumeX size={14} strokeWidth={1.300} className="mr-[7px]" />
        <div className="w-[62px] flex flex-col items-center text-[11.500px] leading-[17px] text-[#e0e0e0]">
          <span>14:21</span>
          <span>26/06/2018</span>
        </div>
        <div className="relative w-[52px] h-[24px] pr-[8px] flex justify-center items-start">
          <svg viewBox="0 0 16 16" className="w-[16px] h-[16px]"><path d="M1 1h14v10H8l-2 3v-3H1z" fill="#ddd" /><path d="M3 4h10M3 6.500h10" stroke="#222" strokeWidth="0.800" /></svg>
          <span className="absolute left-[21px] top-[10px] w-[14px] h-[14px] rounded-full border border-[#ccc] bg-[#222] text-[9px] leading-[12px] text-center text-white">1</span>
        </div>
      </div>
    </div>
  );
}
